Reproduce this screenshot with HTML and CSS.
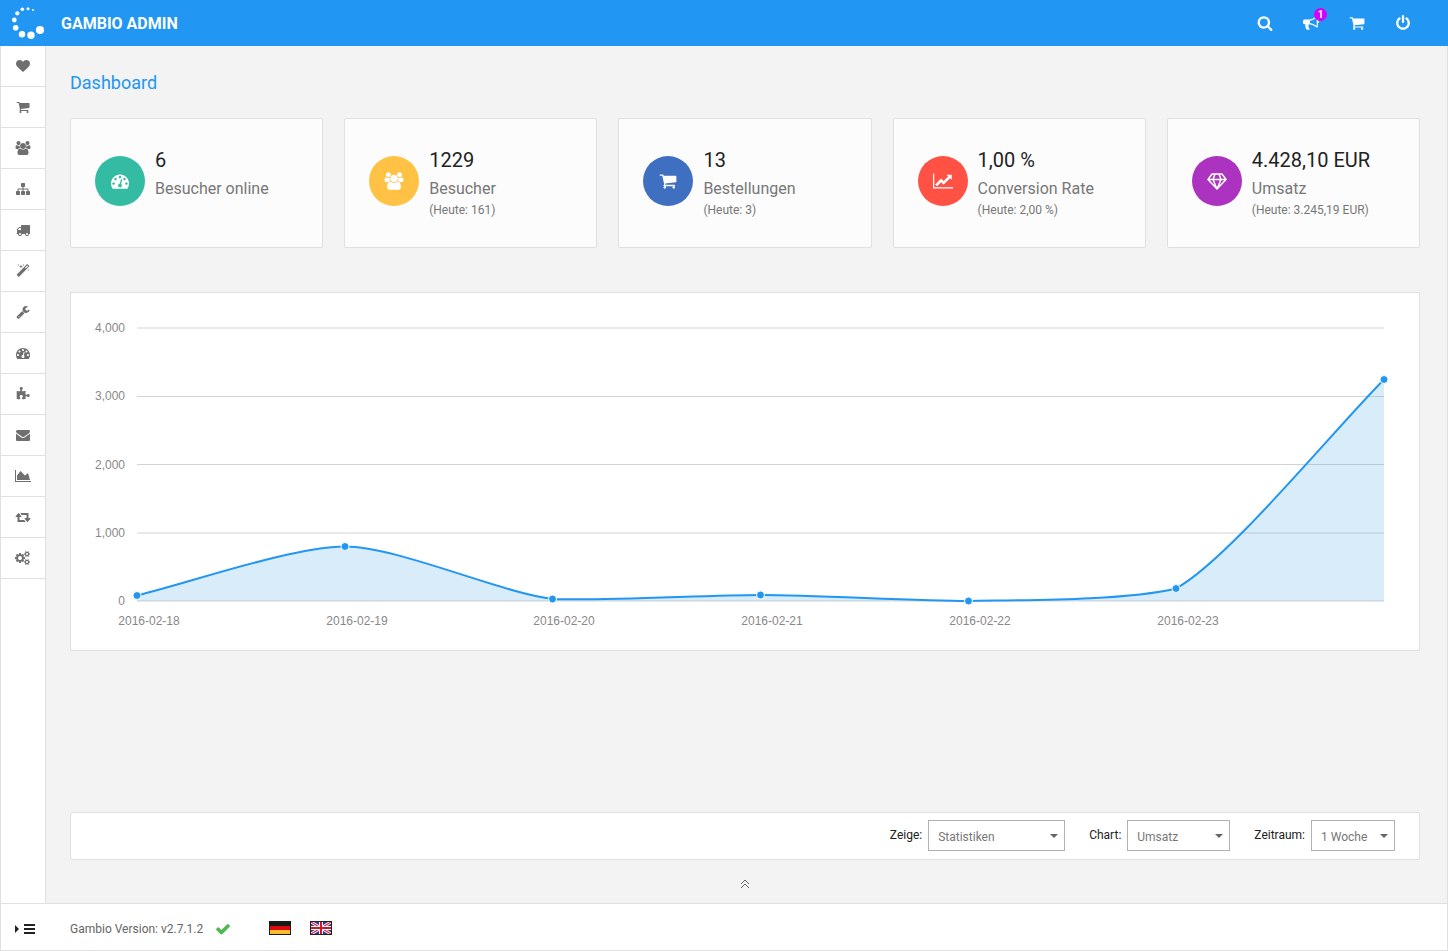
FILE: index.html
```html
<!DOCTYPE html>
<html lang="de">
<head>
    <meta charset="UTF-8">
    <meta name="viewport" content="width=device-width, initial-scale=1.0">
    <title>Gambio Admin</title>
    <link rel="stylesheet" href="styles.css">
</head>
<body>
    <!-- Icons used more than once -->
    <svg class="sprite" aria-hidden="true">
        <symbol id="icon-cart" viewBox="0 0 1792 1792">
            <path d="M704 1536q0 52-38 90t-90 38-90-38-38-90 38-90 90-38 90 38 38 90zm896 0q0 52-38 90t-90 38-90-38-38-90 38-90 90-38 90 38 38 90zm128-1088v512q0 24-16.5 42.5t-40.5 21.5l-1044 122q13 60 13 70 0 16-24 64h920q26 0 45 19t19 45-19 45-45 19h-1024q-26 0-45-19t-19-45q0-11 8-31.5t16-36 21.5-40 15.5-29.5l-177-823h-204q-26 0-45-19t-19-45 19-45 45-19h256q16 0 28.5 6.5t19.5 15.5 13 24.5 8 26 5.5 29.5 4.5 26h1201q26 0 45 19t19 45z"/>
        </symbol>
        <symbol id="icon-users" viewBox="0 0 2048 1792">
            <path d="M657 896q-162 5-265 128h-134q-82 0-138-40.5t-56-118.5q0-353 124-353 6 0 43.5 21t97.5 42.5 119 21.5q67 0 133-23-5 37-5 66 0 137 81 256zm1071 637q0 120-73 189.5t-194 69.5h-874q-121 0-194-69.5t-73-189.5q0-53 3.500-103.500t14-109 26.500-108.500 43-97.500 62-81 85.500-53.500 111.500-20q10 0 43 21.500t73 48 107 48 135 21.500 135-21.500 107-48 73-48 43-21.500q61 0 111.500 20t85.500 53.500 62 81 43 97.500 26.500 108.500 14 109 3.500 103.500zm-1024-1277q0 106-75 181t-181 75-181-75-75-181 75-181 181-75 181 75 75 181zm704 384q0 159-112.500 271.500t-271.500 112.500-271.500-112.500-112.500-271.500 112.500-271.500 271.500-112.500 271.500 112.500 112.500 271.500zm576 225q0 78-56 118.500t-138 40.500h-134q-103-123-265-128 81-119 81-256 0-29-5-66 66 23 133 23 59 0 119-21.500t97.500-42.500 43.500-21q124 0 124 353zm-128-609q0 106-75 181t-181 75-181-75-75-181 75-181 181-75 181 75 75 181z"/>
        </symbol>
        <symbol id="icon-dashboard" viewBox="0 0 1792 1792">
            <path d="M384 1152q0-53-37.500-90.500t-90.500-37.500-90.500 37.500-37.500 90.500 37.500 90.500 90.500 37.500 90.500-37.500 37.500-90.500zm192-448q0-53-37.500-90.500t-90.500-37.500-90.500 37.500-37.500 90.500 37.500 90.500 90.500 37.500 90.500-37.500 37.500-90.500zm428 481l101-382q6-26-7.500-48.500t-38.500-29.500-48 6.500-30 39.500l-101 382q-60 5-107 43.500t-63 98.500q-20 77 20 146t117 89 146-20 89-117q16-60-6-117t-72-91zm660-33q0-53-37.500-90.500t-90.500-37.500-90.500 37.500-37.500 90.500 37.500 90.500 90.500 37.500 90.500-37.500 37.500-90.500zm-640-640q0-53-37.500-90.500t-90.500-37.500-90.500 37.500-37.500 90.500 37.500 90.500 90.500 37.500 90.500-37.500 37.500-90.500zm448 192q0-53-37.500-90.500t-90.500-37.500-90.500 37.500-37.500 90.500 37.500 90.500 90.500 37.500 90.500-37.500 37.500-90.500zm320 448q0 261-141 483-19 29-54 29h-1402q-35 0-54-29-141-221-141-483 0-182 71-348t191-286 286-191 348-71 348 71 286 191 191 286 71 348z"/>
        </symbol>
    </svg>

    <header class="header">
        <a class="brand" href="#">
            <svg class="logo" viewBox="0 0 46 46" aria-hidden="true">
                <circle cx="33" cy="10" r="1"/>
                <circle cx="28" cy="8.700" r="1.500"/>
                <circle cx="22.300" cy="9.300" r="1.800"/>
                <circle cx="17.300" cy="13.300" r="2.100"/>
                <circle cx="14.300" cy="20" r="2.400"/>
                <circle cx="15.700" cy="27.700" r="2.800"/>
                <circle cx="22" cy="34.300" r="3.200"/>
                <circle cx="31" cy="35.300" r="3.700"/>
                <circle cx="40" cy="30" r="4.100"/>
            </svg>
            <span>GAMBIO ADMIN</span>
        </a>
        <div class="header-tools">
            <button class="tool" type="button" aria-label="Suche">
                <svg viewBox="0 0 1792 1792"><path d="M1216 832q0-185-131.500-316.500t-316.500-131.500-316.500 131.500-131.500 316.500 131.500 316.500 316.500 131.500 316.500-131.500 131.500-316.500zm512 832q0 52-38 90t-90 38q-54 0-90-38l-343-342q-179 124-399 124-143 0-273.500-55.500t-225-150-150-225-55.500-273.500 55.500-273.500 150-225 225-150 273.500-55.500 273.500 55.500 225 150 150 225 55.500 273.500q0 220-124 399l343 343q37 37 37 90z"/></svg>
            </button>
            <button class="tool" type="button" aria-label="Neuigkeiten">
                <svg viewBox="0 0 1792 1792"><path d="M1664 640q53 0 90.500 37.500t37.500 90.500-37.500 90.500-90.500 37.500v384q0 52-38 90t-90 38q-417-347-812-380-58 19-91 66t-31 100.500 40 92.500q-20 33-23 65.500t6 58 33.500 55 48 50 61.500 50.500q-29 58-111.500 83t-168.500 11.500-132-55.500q-7-23-29.500-87.500t-32-94.500-23-89-15-101 3.500-98.500 22-110.500h-122q-66 0-113-47t-47-113v-192q0-66 47-113t113-47h480q435 0 896-384 52 0 90 38t38 90v384zm-128 604v-954q-394 302-768 343v270q377 42 768 341z"/></svg>
                <span class="badge">1</span>
            </button>
            <button class="tool" type="button" aria-label="Shop">
                <svg><use href="#icon-cart"/></svg>
            </button>
            <button class="tool" type="button" aria-label="Abmelden">
                <svg viewBox="0 0 1792 1792"><path d="M1664 896q0 156-61 298t-164 245-245 164-298 61-298-61-245-164-164-245-61-298q0-182 80.500-343t226.500-270q43-32 95.500-25t83.500 50q32 42 24.500 94.500t-49.500 84.500q-98 74-151.500 181t-53.500 228q0 104 40.500 198.500t109.500 163.500 163.500 109.500 198.500 40.500 198.500-40.500 163.500-109.500 109.500-163.500 40.500-198.500q0-121-53.500-228t-151.500-181q-42-32-49.500-84.500t24.500-94.500q31-43 84-50t95 25q146 109 226.500 270t80.500 343zm-640-768v640q0 52-38 90t-90 38-90-38-38-90v-640q0-52 38-90t90-38 90 38 38 90z"/></svg>
            </button>
        </div>
    </header>

    <div class="layout">
        <nav class="sidebar">
            <a href="#" aria-label="Favoriten"><svg viewBox="0 0 1792 1792"><path d="M896 1664q-26 0-44-18l-624-602q-10-8-27.500-26t-55.500-65.500-68-97.500-53.500-121-23.500-138q0-220 127-344t351-124q62 0 126.500 21.500t120 58 95.500 68.500 76 68q36-36 76-68t95.500-68.500 120-58 126.500-21.500q224 0 351 124t127 344q0 221-229 450l-623 600q-18 18-44 18z"/></svg></a>
            <a href="#" aria-label="Bestellungen"><svg><use href="#icon-cart"/></svg></a>
            <a href="#" aria-label="Kunden"><svg class="wide"><use href="#icon-users"/></svg></a>
            <a href="#" aria-label="Artikel"><svg viewBox="0 0 1792 1792"><path d="M1792 1248v320q0 40-28 68t-68 28h-320q-40 0-68-28t-28-68v-320q0-40 28-68t68-28h96v-192h-512v192h96q40 0 68 28t28 68v320q0 40-28 68t-68 28h-320q-40 0-68-28t-28-68v-320q0-40 28-68t68-28h96v-192h-512v192h96q40 0 68 28t28 68v320q0 40-28 68t-68 28h-320q-40 0-68-28t-28-68v-320q0-40 28-68t68-28h96v-192q0-52 38-90t90-38h512v-192h-96q-40 0-68-28t-28-68v-320q0-40 28-68t68-28h320q40 0 68 28t28 68v320q0 40-28 68t-68 28h-96v192h512q52 0 90 38t38 90v192h96q40 0 68 28t28 68z"/></svg></a>
            <a href="#" aria-label="Versand"><svg viewBox="0 0 1792 1792"><path d="M640 1408q0-52-38-90t-90-38-90 38-38 90 38 90 90 38 90-38 38-90zm-384-512h384v-256h-158q-13 0-22 9l-195 195q-9 9-9 22v30zm1280 512q0-52-38-90t-90-38-90 38-38 90 38 90 90 38 90-38 38-90zm256-1088v1024q0 15-4 26.500t-13.500 18.500-16.500 11.500-23.500 6-22.500 2-25.500 0-22.500-.5q0 106-75 181t-181 75-181-75-75-181h-384q0 106-75 181t-181 75-181-75-75-181h-64q-3 0-22.500.5t-25.500 0-22.500-2-23.500-6-16.500-11.500-13.500-18.500-4-26.500q0-26 19-45t45-19v-320q0-8-.5-35t0-38 2.500-34.500 6.500-37 14-30.500 22.500-30l198-198q19-19 50.500-32t58.500-13h160v-192q0-26 19-45t45-19h1024q26 0 45 19t19 45z"/></svg></a>
            <a href="#" aria-label="Darstellung"><svg viewBox="0 0 1792 1792"><path d="M1254 581l293-293-107-107-293 293zm447-293q0 27-18 45l-1286 1286q-18 18-45 18t-45-18l-198-198q-18-18-18-45t18-45l1286-1286q18-18 45-18t45 18l198 198q18 18 18 45zm-1351-190l98 30-98 30-30 98-30-98-98-30 98-30 30-98zm350 162l196 60-196 60-60 196-60-196-196-60 196-60 60-196zm930 478l98 30-98 30-30 98-30-98-98-30 98-30 30-98zm-640-640l98 30-98 30-30 98-30-98-98-30 98-30 30-98z"/></svg></a>
            <a href="#" aria-label="Toolbox"><svg viewBox="0 0 1792 1792"><path d="M448 1472q0-26-19-45t-45-19-45 19-19 45 19 45 45 19 45-19 19-45zm644-420l-682 682q-37 37-90 37-52 0-91-37l-106-108q-38-36-38-90 0-53 38-91l681-681q39 98 114.500 173.500t173.500 114.500zm634-435q0 39-23 106-47 134-164.500 217.500t-258.500 83.500q-185 0-316.500-131.500t-131.500-316.500 131.500-316.500 316.500-131.500q58 0 121.500 16.500t107.500 46.500q16 11 16 28t-16 28l-293 169v224l193 107q5-3 79-48.500t135.500-81 70.500-35.500q15 0 23.500 10t8.500 25z"/></svg></a>
            <a href="#" aria-label="SEO"><svg><use href="#icon-dashboard"/></svg></a>
            <a href="#" aria-label="Module"><svg viewBox="0 0 1792 1792"><path d="M1755 1098q0 81-44.500 135t-123.500 54q-41 0-77.500-17.500t-59-38-56.500-38-71-17.500q-110 0-110 124 0 39 16 115t15 115v5q-22 0-33 1-34 3-97.500 11.500t-115.500 13.500-98 5q-61 0-103-26.500t-42-83.500q0-37 17.500-71t38-56.500 38-59 17.500-77.500q0-79-54-123.500t-135-44.500q-84 0-143 45.500t-59 127.500q0 43 15 83t33.500 64.500 33.500 53 15 50.500q0 45-46 89-37 35-117 35-95 0-245-24-9-2-27.500-4t-27.500-4l-13-2q-1 0-3-1-2 0-2-1v-1024q2 1 17.500 3.500t34 5 21.500 3.500q150 24 245 24 80 0 117-35 46-44 46-89 0-22-15-50.500t-33.500-53-33.500-64.500-15-83q0-82 59-127.500t144-45.500q80 0 134 44.500t54 123.500q0 41-17.500 77.500t-38 59-38 56.500-17.500 71q0 57 42 83.500t103 26.500q64 0 180-15t163-17v2q-1 2-3.500 17.500t-5 34-3.500 21.500q-24 150-24 245 0 80 35 117 44 46 89 46 22 0 50.500-15t53-33.500 64.500-33.500 83-15q82 0 127.500 59t45.500 143z"/></svg></a>
            <a href="#" aria-label="E-Mails"><svg viewBox="0 0 1792 1792"><path d="M1792 710v794q0 66-47 113t-113 47h-1472q-66 0-113-47t-47-113v-794q44 49 101 87 362 246 497 345 57 42 92.500 65.500t94.500 48 110 24.500h2q51 0 110-24.500t94.500-48 92.500-65.500q170-123 498-345 57-39 100-87zm0-294q0 79-49 151t-122 123q-376 261-468 325-10 7-42.500 31t-54 38.500-52 32.500-57.500 27-50 9h-2q-23 0-50-9t-57.500-27-52-32.500-54-38.500-42.500-31q-91-64-262-182.500t-205-142.500q-62-42-117-115.500t-55-136.500q0-78 41.500-130t118.500-52h1472q65 0 112.500 47t47.500 113z"/></svg></a>
            <a href="#" aria-label="Statistiken"><svg class="wide" viewBox="0 0 2048 1792"><path d="M2048 1536v128h-2048v-1536h128v1408h1920zm-384-1024l256 896h-1664v-576l448-576 576 576z"/></svg></a>
            <a href="#" aria-label="Import und Export"><svg class="wide" viewBox="0 0 1920 1792"><path d="M1280 1504q0 13-9.500 22.500t-22.500 9.500h-960q-8 0-13.500-2t-9-7-5.500-8-3-11.500-1-11.500v-600h-192q-26 0-45-19t-19-45q0-24 15-41l320-384q19-22 49-22t49 22l320 384q15 17 15 41 0 26-19 45t-45 19h-192v384h576q16 0 25 11l160 192q7 10 7 21zm640-416q0 24-15 41l-320 384q-20 23-49 23t-49-23l-320-384q-15-17-15-41 0-26 19-45t45-19h192v-384h-576q-16 0-25-12l-160-192q-7-9-7-20 0-13 9.500-22.500t22.500-9.500h960q8 0 13.500 2t9 7 5.500 8 3 11.500 1 11.500v600h192q26 0 45 19t19 45z"/></svg></a>
            <a href="#" aria-label="Einstellungen"><svg class="wide" viewBox="0 0 1920 1792"><path d="M832 896q0-106-75-181t-181-75-181 75-75 181 75 181 181 75 181-75 75-181zm768 512q0-52-38-90t-90-38-90 38-38 90q0 53 37.500 90.500t90.500 37.500 90.500-37.500 37.500-90.500zm0-1024q0-52-38-90t-90-38-90 38-38 90q0 53 37.500 90.500t90.500 37.500 90.500-37.500 37.500-90.500zm-384 421v185q0 10-7 19.500t-16 10.500l-155 24q-11 35-32 76 34 48 90 115 7 11 7 20 0 12-7 19-23 30-82.500 89.500t-78.500 59.500q-11 0-21-7l-115-90q-37 19-77 31-11 108-23 155-7 24-30 24h-186q-11 0-20-7.500t-10-17.500l-23-153q-34-10-75-31l-118 89q-7 7-20 7-11 0-21-8-144-133-144-160 0-9 7-19 10-14 41-53t47-61q-23-44-35-82l-152-24q-10-1-17-9.500t-7-19.500v-185q0-10 7-19.500t16-10.500l155-24q11-35 32-76-34-48-90-115-7-11-7-20 0-12 7-20 22-30 82-89t79-59q11 0 21 7l115 90q34-18 77-32 11-108 23-154 7-24 30-24h186q11 0 20 7.500t10 17.500l23 153q34 10 75 31l118-89q8-7 20-7 11 0 21 8 144 133 144 160 0 8-7 19-12 16-42 54t-45 60q23 48 34 82l152 23q10 2 17 10.500t7 19.500zm640 533v140q0 16-149 31-12 27-30 52 51 113 51 138 0 4-4 7-122 71-124 71-8 0-46-47t-52-68q-20 2-30 2t-30-2q-14 21-52 68t-46 47q-2 0-124-71-4-3-4-7 0-25 51-138-18-25-30-52-149-15-149-31v-140q0-16 149-31 13-29 30-52-51-113-51-138 0-4 4-7 4-2 35-20t59-34 30-16q8 0 46 46.500t52 67.500q20-2 30-2t30 2q51-71 92-112l6-2q4 0 124 70 4 3 4 7 0 25-51 138 17 23 30 52 149 15 149 31zm0-1024v140q0 16-149 31-12 27-30 52 51 113 51 138 0 4-4 7-122 71-124 71-8 0-46-47t-52-68q-20 2-30 2t-30-2q-14 21-52 68t-46 47q-2 0-124-71-4-3-4-7 0-25 51-138-18-25-30-52-149-15-149-31v-140q0-16 149-31 13-29 30-52-51-113-51-138 0-4 4-7 4-2 35-20t59-34 30-16q8 0 46 46.500t52 67.500q20-2 30-2t30 2q51-71 92-112l6-2q4 0 124 70 4 3 4 7 0 25-51 138 17 23 30 52 149 15 149 31z"/></svg></a>
        </nav>

        <main class="content">
            <h1 class="title">Dashboard</h1>

            <section class="cards">
                <div class="card">
                    <span class="circle green"><svg><use href="#icon-dashboard"/></svg></span>
                    <div class="card-text">
                        <strong>6</strong>
                        <span>Besucher online</span>
                    </div>
                </div>
                <div class="card">
                    <span class="circle yellow"><svg class="wide"><use href="#icon-users"/></svg></span>
                    <div class="card-text">
                        <strong>1229</strong>
                        <span>Besucher</span>
                        <small>(Heute: 161)</small>
                    </div>
                </div>
                <div class="card">
                    <span class="circle blue"><svg><use href="#icon-cart"/></svg></span>
                    <div class="card-text">
                        <strong>13</strong>
                        <span>Bestellungen</span>
                        <small>(Heute: 3)</small>
                    </div>
                </div>
                <div class="card">
                    <span class="circle red"><svg class="wide" viewBox="0 0 2048 1792"><path d="M2048 1536v128h-2048v-1536h128v1408h1920zm-128-1248v435q0 21-19.500 29.500t-35.500-7.500l-121-121-633 633q-10 10-23 10t-23-10l-233-233-416 416-192-192 585-585q10-10 23-10t23 10l233 233 464-464-121-121q-16-16-7.500-35.500t29.500-19.500h435q14 0 23 9t9 23z"/></svg></span>
                    <div class="card-text">
                        <strong>1,00 %</strong>
                        <span>Conversion Rate</span>
                        <small>(Heute: 2,00 %)</small>
                    </div>
                </div>
                <div class="card">
                    <span class="circle purple"><svg class="wide outline" viewBox="0 0 20 18"><path d="M5 2h10l4 5.500L10 17 1 7.500zM1 7.500h18M8 2L6 7.500 10 17l4-9.500L12 2"/></svg></span>
                    <div class="card-text">
                        <strong>4.428,10 EUR</strong>
                        <span>Umsatz</span>
                        <small>(Heute: 3.245,19 EUR)</small>
                    </div>
                </div>
            </section>

            <section class="chart">
                <svg viewBox="0 0 1348 357" role="img" aria-label="Umsatz">
                    <g class="grid">
                        <path d="M66 35H1313M66 103.500H1313M66 171.500H1313M66 240H1313M66 308H1313"/>
                    </g>
                    <g class="axis-y">
                        <text x="54" y="39">4,000</text>
                        <text x="54" y="107">3,000</text>
                        <text x="54" y="176">2,000</text>
                        <text x="54" y="244">1,000</text>
                        <text x="54" y="312">0</text>
                    </g>
                    <g class="axis-x">
                        <text x="78" y="332">2016-02-18</text>
                        <text x="286" y="332">2016-02-19</text>
                        <text x="493" y="332">2016-02-20</text>
                        <text x="701" y="332">2016-02-21</text>
                        <text x="909" y="332">2016-02-22</text>
                        <text x="1117" y="332">2016-02-23</text>
                    </g>
                    <path class="area" d="M66 302.500C118 290 222 253.500 274 253.500S430 300 482 306C534 308 637 302 689.500 302S845 308 897 308C949 307 1053 308 1105 295.500C1157 267 1261 139 1313 86.500V308H66z"/>
                    <path class="line" d="M66 302.500C118 290 222 253.500 274 253.500S430 300 482 306C534 308 637 302 689.500 302S845 308 897 308C949 307 1053 308 1105 295.500C1157 267 1261 139 1313 86.500"/>
                    <g class="points">
                        <circle cx="66" cy="302.500" r="4"/>
                        <circle cx="274" cy="253.500" r="4"/>
                        <circle cx="481.500" cy="306" r="4"/>
                        <circle cx="689.500" cy="302" r="4"/>
                        <circle cx="897.500" cy="308" r="4"/>
                        <circle cx="1105" cy="295.500" r="4"/>
                        <circle cx="1313" cy="86.500" r="4"/>
                    </g>
                </svg>
            </section>

            <form class="filters">
                <div class="filter">
                    <label for="show">Zeige:</label>
                    <div class="select show">
                        <select id="show">
                            <option>Statistiken</option>
                        </select>
                    </div>
                </div>
                <div class="filter">
                    <label for="chart">Chart:</label>
                    <div class="select type">
                        <select id="chart">
                            <option>Umsatz</option>
                        </select>
                    </div>
                </div>
                <div class="filter">
                    <label for="period">Zeitraum:</label>
                    <div class="select period">
                        <select id="period">
                            <option>1 Woche</option>
                        </select>
                    </div>
                </div>
            </form>

            <button class="expand" type="button" aria-label="Infobox">
                <svg viewBox="0 0 10 10"><path d="M1 5l4-4 4 4M1 9l4-4 4 4"/></svg>
            </button>
        </main>
    </div>

    <footer class="footer">
        <button class="menu-toggle" type="button" aria-label="Menü">
            <svg viewBox="0 0 20 12"><path d="M0 2l4 4-4 4zM9 1h11v2H9zM9 5h11v2H9zM9 9h11v2H9z"/></svg>
        </button>
        <span class="version">Gambio Version: v2.7.1.2</span>
        <svg class="check" viewBox="0 0 1792 1792" aria-hidden="true"><path d="M1671 566q0 40-28 68l-724 724-136 136q-28 28-68 28t-68-28l-136-136-362-362q-28-28-28-68t28-68l136-136q28-28 68-28t68 28l294 295 656-657q28-28 68-28t68 28l136 136q28 28 28 68z"/></svg>
        <div class="languages">
            <a href="#" aria-label="Deutsch">
                <svg viewBox="0 0 22 14">
                    <rect width="22" height="14" fill="#1a1a1a"/>
                    <rect x="1" y="5" width="20" height="4" fill="#dd0b0b"/>
                    <rect x="1" y="9" width="20" height="4" fill="#fcb932"/>
                </svg>
            </a>
            <a href="#" aria-label="English">
                <svg viewBox="0 0 22 14">
                    <rect width="22" height="14" fill="#2b3a8c"/>
                    <path d="M1 1l20 12M21 1L1 13" stroke="#fff" stroke-width="3"/>
                    <path d="M1 1l20 12M21 1L1 13" stroke="#d8203a" stroke-width="1.200"/>
                    <path d="M11 1v12M1 7h20" stroke="#fff" stroke-width="4"/>
                    <path d="M11 1v12M1 7h20" stroke="#d8102a" stroke-width="2"/>
                    <rect x=".5" y=".5" width="21" height="13" fill="none" stroke="#222"/>
                </svg>
            </a>
        </div>
    </footer>
</body>
</html>
```
FILE: styles.css
```css
* {
    box-sizing: border-box;
}

body {
    font-family: Roboto, "Liberation Sans", sans-serif;
    font-size: 12px;
    color: #222;
    background-color: #f3f3f3;
    margin: 0;
    min-height: 100vh;
    display: flex;
    flex-direction: column;
}

button {
    background: none;
    border: none;
    padding: 0;
    cursor: pointer;
}

svg {
    display: block;
    fill: currentColor;
}

.sprite {
    display: none;
}

/* Header */
.header {
    display: flex;
    justify-content: space-between;
    height: 46px;
    padding-right: 22px;
    background-color: #2196f3;
    color: #fff;
}

.brand {
    display: flex;
    align-items: center;
    gap: 15px;
    color: #fff;
    font-size: 16px;
    font-weight: bold;
    text-decoration: none;
}

.logo {
    width: 46px;
    height: 46px;
}

.header-tools {
    display: flex;
}

.tool {
    position: relative;
    display: flex;
    align-items: center;
    justify-content: center;
    width: 46px;
    color: #fff;
}

.tool svg {
    width: 16px;
    height: 16px;
}

.badge {
    position: absolute;
    top: 8px;
    right: 7px;
    width: 13px;
    height: 13px;
    border-radius: 50%;
    background-color: #d500f9;
    font-family: Roboto, sans-serif;
    font-size: 10px;
    font-weight: bold;
    line-height: 13px;
    text-align: center;
}

/* Sidebar */
.layout {
    display: flex;
    flex: 1;
}

.sidebar {
    width: 46px;
    background-color: #fff;
    border: solid #e0e0e0;
    border-width: 0 1px;
}

.sidebar a {
    display: flex;
    align-items: center;
    justify-content: center;
    height: 41px;
    border-bottom: 1px solid #e0e0e0;
    color: #6f6f6f;
}

.sidebar svg {
    width: 14px;
    height: 14px;
}

.sidebar svg.wide {
    width: 16px;
}

/* Content */
.content {
    display: flex;
    flex-direction: column;
    flex: 1;
    padding: 24px 27px 0 24px;
    border-right: 1px solid #e0e0e0;
}

.title {
    margin: 0 0 22px;
    color: #2196f3;
    font-size: 18px;
    font-weight: normal;
    line-height: 26px;
}

.cards {
    display: grid;
    grid-template-columns: repeat(5, 1fr);
    gap: 21px;
    margin-bottom: 44px;
}

.card {
    display: flex;
    gap: 10px;
    min-height: 130px;
    padding: 27px 24px;
    background-color: #fcfcfc;
    border: 1px solid #e0e0e0;
    border-radius: 2px;
}

.circle {
    display: flex;
    flex: none;
    align-items: center;
    justify-content: center;
    width: 50px;
    height: 50px;
    margin-top: 10px;
    border-radius: 50%;
    color: #fff;
}

.circle svg {
    width: 18px;
    height: 18px;
}

.circle svg.wide {
    width: 20px;
}

.circle .outline {
    fill: none;
    stroke: #fff;
    stroke-width: 1.5;
    stroke-linejoin: round;
}

.green {
    background-color: #33bba3;
}

.yellow {
    background-color: #ffc244;
}

.blue {
    background-color: #3f6fc1;
}

.red {
    background-color: #ff5144;
}

.purple {
    background-color: #ac32c0;
}

.card-text {
    display: flex;
    flex-direction: column;
    color: #777;
    white-space: nowrap;
}

.card-text strong {
    color: #222;
    font-size: 20px;
    font-weight: normal;
    line-height: 28px;
}

.card-text span {
    font-size: 16px;
    line-height: 29px;
}

.card-text small {
    font-size: 12px;
    line-height: 15px;
}

/* Chart */
.chart {
    margin-bottom: 24px;
    background-color: #fff;
    border: 1px solid #e0e0e0;
}

.chart svg {
    width: 100%;
}

.chart text {
    fill: #888;
    font-family: "Liberation Sans", Arial, sans-serif;
    font-size: 12px;
}

.axis-y {
    text-anchor: end;
}

.axis-x {
    text-anchor: middle;
}

.grid {
    stroke: #d3d3d3;
}

.area {
    fill: #2b95e6;
    fill-opacity: 0.18;
}

.line {
    fill: none;
    stroke: #2196f3;
    stroke-width: 2;
}

.points {
    fill: #2196f3;
    stroke: #fff;
}

/* Filter bar */
.filters {
    display: flex;
    justify-content: flex-end;
    gap: 24px;
    margin-top: auto;
    padding: 7px 24px 8px;
    background-color: #fff;
    border: 1px solid #e0e0e0;
    border-radius: 2px;
}

.filter {
    display: flex;
    align-items: center;
    gap: 6px;
}

.filter label {
    padding-bottom: 2px;
}

.select {
    position: relative;
}

.select::after {
    content: "";
    position: absolute;
    top: 14px;
    right: 7px;
    border: 4px solid transparent;
    border-top-color: #666;
    border-bottom: none;
    pointer-events: none;
}

select {
    display: block;
    width: 100%;
    height: 31px;
    padding: 2px 9px 0;
    appearance: none;
    background-color: #fff;
    border: 1px solid #b0b0b0;
    border-radius: 0;
    color: #777;
    font-family: inherit;
    font-size: 12px;
}

.show {
    width: 137px;
}

.type {
    width: 103px;
}

.period {
    width: 84px;
}

.expand {
    display: flex;
    align-items: center;
    justify-content: center;
    align-self: center;
    width: 30px;
    height: 43px;
    padding-top: 4px;
}

.expand svg {
    width: 10px;
    height: 10px;
    fill: none;
    stroke: #666;
}

/* Footer */
.footer {
    display: flex;
    align-items: center;
    height: 48px;
    padding-top: 2px;
    background-color: #fff;
    border: 1px solid #e0e0e0;
}

.menu-toggle {
    width: 69px;
    padding: 2px 0 0 14px;
    color: #222;
}

.menu-toggle svg {
    width: 20px;
    height: 12px;
}

.version {
    padding-top: 2px;
    color: #666;
}

.check {
    width: 16px;
    height: 16px;
    margin: 2px 38px 0 12px;
    color: #4cb84f;
}

.languages {
    display: flex;
    gap: 19px;
}

.languages svg {
    width: 22px;
    height: 14px;
}
```
